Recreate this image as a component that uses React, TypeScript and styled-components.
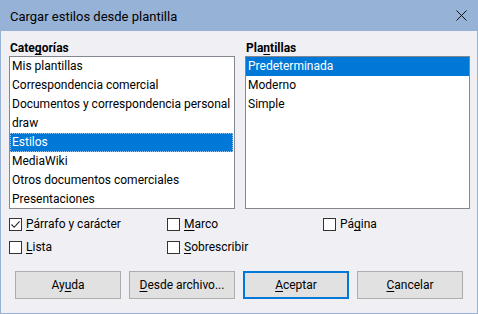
import React from "react";
import styled, { createGlobalStyle } from "styled-components";

const Global = createGlobalStyle`
  html, body { margin: 0; padding: 0; }
  body { font-family: Roboto, "Noto Sans", sans-serif; font-size: 12px; color: #000; }
  * { box-sizing: border-box; }
`;

const Window = styled.div`
  width: 478px;
  height: 314px;
  display: flex;
  flex-direction: column;
  background: #f0f0f4;
  border: 1px solid #96b2d7;
  border-top: none;
`;

const TitleBar = styled.div`
  height: 31px;
  margin: 0 -1px;
  background: #96b2d7;
  display: flex;
  align-items: center;
  justify-content: space-between;
  padding: 0 10px 0 10px;
`;

const Title = styled.span`
  font-size: 13px;
  color: #000;
  padding-top: 2px;
`;

const CloseBtn = styled.svg`
  width: 11px;
  height: 11px;
  margin-right: 1px;
`;

const Body = styled.div`
  flex: 1;
  display: flex;
  flex-direction: column;
  padding: 9px 8px 0 8px;
`;

const Columns = styled.div`
  display: grid;
  grid-template-columns: 226px 225px;
  column-gap: 10px;
`;

const Column = styled.div`
  display: flex;
  flex-direction: column;
`;

const Label = styled.div`
  font-weight: bold;
  height: 16px;
  line-height: 16px;
  padding-left: 1px;
`;

const ListBox = styled.div`
  height: 153px;
  border: 1px solid #828790;
  background: #fff;
  overflow: hidden;
`;

const Item = styled.div<{ $selected?: boolean; $focused?: boolean }>`
  height: 19px;
  line-height: 19px;
  padding-left: 2px;
  white-space: nowrap;
  background: ${(p) => (p.$selected ? "#0078d7" : "transparent")};
  color: ${(p) => (p.$selected ? "#fff" : "#000")};
  outline: ${(p) => (p.$focused ? "1px dotted #9cc7ef" : "none")};
  outline-offset: -1px;
  margin-right: ${(p) => (p.$focused ? "1px" : "0")};
`;

const Options = styled.div`
  display: grid;
  grid-template-columns: 158px 156px 1fr;
  grid-auto-rows: 23px;
  margin-top: 8px;
`;

const Check = styled.label`
  display: flex;
  align-items: center;
  gap: 4px;
  height: 14px;
`;

const Box = styled.span<{ $checked?: boolean }>`
  width: 13px;
  height: 13px;
  border: 1px solid #333;
  background: #fff;
  display: inline-flex;
  align-items: center;
  justify-content: center;
  flex: none;
`;

const Buttons = styled.div`
  display: grid;
  grid-template-columns: repeat(4, 106px);
  column-gap: 8px;
  margin-top: 8px;
  padding-left: 6px;
`;

const Button = styled.div<{ $default?: boolean }>`
  height: 28px;
  background: #e1e1e1;
  border: ${(p) => (p.$default ? "2px solid #0078d7" : "1px solid #adadad")};
  display: flex;
  align-items: center;
  justify-content: center;
`;

const U = styled.span`
  text-decoration: underline;
  text-underline-offset: 2px;
`;

const categories = [
  "Mis plantillas",
  "Correspondencia comercial",
  "Documentos y correspondencia personal",
  "draw",
  "Estilos",
  "MediaWiki",
  "Otros documentos comerciales",
  "Presentaciones",
];

const templates = ["Predeterminada", "Moderno", "Simple"];

const Tick = () => (
  <svg width="11" height="11" viewBox="0 0 11 11">
    <path d="M1.5 5.5 L4.2 8.3 L9.6 2.4" fill="none" stroke="#222" strokeWidth="1.1" />
  </svg>
);

export default function App() {
  return (
    <>
      <Global />
      <Window>
        <TitleBar>
          <Title>Cargar estilos desde plantilla</Title>
          <CloseBtn viewBox="0 0 11 11">
            <path d="M0.5 0.5 L10.5 10.5 M10.5 0.5 L0.5 10.5" stroke="#111" strokeWidth="1" />
          </CloseBtn>
        </TitleBar>
        <Body>
          <Columns>
            <Column>
              <Label>
                Cate<U>g</U>orías
              </Label>
              <ListBox>
                {categories.map((c, i) => (
                  <Item key={c} $selected={i === 4} $focused={i === 4}>
                    {c}
                  </Item>
                ))}
              </ListBox>
            </Column>
            <Column>
              <Label>
                Pla<U>n</U>tillas
              </Label>
              <ListBox>
                {templates.map((t, i) => (
                  <Item key={t} $selected={i === 0}>
                    {t}
                  </Item>
                ))}
              </ListBox>
            </Column>
          </Columns>
          <Options>
            <Check>
              <Box $checked>
                <Tick />
              </Box>
              <span>
                <U>P</U>árrafo y carácter
              </span>
            </Check>
            <Check>
              <Box />
              <span>
                <U>M</U>arco
              </span>
            </Check>
            <Check>
              <Box />
              <span>
                Pá<U>g</U>ina
              </span>
            </Check>
            <Check>
              <Box />
              <span>
                <U>L</U>ista
              </span>
            </Check>
            <Check>
              <Box />
              <span>
                <U>S</U>obrescribir
              </span>
            </Check>
          </Options>
          <Buttons>
            <Button>
              <span>
                Ay<U>u</U>da
              </span>
            </Button>
            <Button>
              <span>
                <U>D</U>esde archivo...
              </span>
            </Button>
            <Button $default>
              <span>
                <U>A</U>ceptar
              </span>
            </Button>
            <Button>
              <span>
                <U>C</U>ancelar
              </span>
            </Button>
          </Buttons>
        </Body>
      </Window>
    </>
  );
}
